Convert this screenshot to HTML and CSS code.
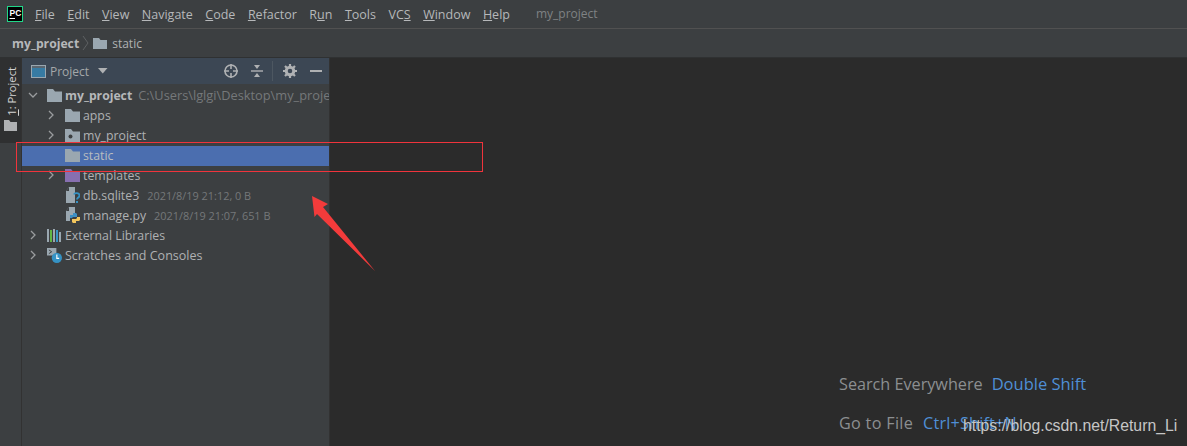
FILE: index.html
```html
<!DOCTYPE html>
<html lang="en">
<head>
<meta charset="utf-8">
<title>my_project</title>
<link rel="stylesheet" href="styles.css">
</head>
<body>
<div class="ide">
  <header class="menubar">
    <svg class="logo" width="16" height="16" viewBox="0 0 16 16"><rect width="16" height="16" fill="#21d789"/><rect x="1" y="1" width="14" height="14" fill="#000"/><text x="2.500" y="9.800" class="logo-text">PC</text><rect x="2.500" y="12" width="5.500" height="1" fill="#fff"/></svg>
    <nav class="menu">
      <span><u>F</u>ile</span><span><u>E</u>dit</span><span><u>V</u>iew</span><span><u>N</u>avigate</span><span><u>C</u>ode</span><span><u>R</u>efactor</span><span>R<u>u</u>n</span><span><u>T</u>ools</span><span>VC<u>S</u></span><span><u>W</u>indow</span><span><u>H</u>elp</span>
    </nav>
    <span class="window-title">my_project</span>
  </header>
  <div class="crumbs">
    <b>my_project</b>
    <svg class="crumb-sep" width="8" height="16" viewBox="0 0 8 16"><path d="M1 1l5 7-5 7" fill="none" stroke="#5e6163"/></svg>
    <svg class="folder" width="14" height="12" viewBox="0 0 14 12"><path d="M0 1h6l1.500 2H14v9H0z" fill="#9aa7b0"/></svg>
    <span>static</span>
  </div>
  <div class="body">
    <aside class="strip">
      <div class="strip-tab">
        <span class="strip-label"><u>1</u>: Project</span>
        <svg width="13" height="11" viewBox="0 0 13 11"><path d="M0 0h5l1.500 2H13v9H0z" fill="#afb1b3"/></svg>
      </div>
    </aside>
    <section class="panel">
      <div class="panel-head">
        <svg class="win-icon" width="15" height="13" viewBox="0 0 15 13"><rect x=".5" y=".5" width="14" height="12" fill="#3592c4" fill-opacity=".7" stroke="#9aa7b0"/><rect x="1" y="1" width="13" height="2" fill="#5a6670"/></svg>
        <span class="panel-title">Project</span>
        <svg class="caret" width="10" height="6" viewBox="0 0 10 6"><path d="M0 0h9.500L4.750 5.500z" fill="#afb1b3"/></svg>
        <div class="panel-tools">
          <svg width="16" height="16" viewBox="0 0 16 16"><circle cx="8" cy="8" r="6" fill="none" stroke="#afb1b3" stroke-width="1.600"/><path d="M8 1v5M8 10v5M1 8h5M10 8h5" stroke="#afb1b3" stroke-width="1.600"/></svg>
          <svg class="tool-collapse" width="14" height="14" viewBox="0 0 14 14"><path d="M1 7h12" stroke="#afb1b3" stroke-width="1.400"/><path d="M4 1h6L7 5zM4 13h6L7 9z" fill="#afb1b3"/></svg>
          <i class="tool-sep"></i>
          <svg class="tool-gear" width="14" height="14" viewBox="0 0 14 14"><circle cx="7" cy="7" r="3.800" fill="none" stroke="#afb1b3" stroke-width="3"/><path d="M7 0v3M7 11v3M0 7h3M11 7h3M2 2l2 2M10 10l2 2M12 2l-2 2M4 10l-2 2" stroke="#afb1b3" stroke-width="2.200"/></svg>
          <i class="tool-min"></i>
        </div>
      </div>
      <ul class="tree">
        <li class="row lvl0">
          <svg class="arrow" width="10" height="10" viewBox="0 0 10 10"><path d="M1 3l4 4 4-4" fill="none" stroke="#9a9c9e" stroke-width="1.300"/></svg>
          <svg class="ico" width="15" height="13" viewBox="0 0 15 13"><path d="M0 0h6l2 2.500h7V13H0z" fill="#9aa7b0"/></svg>
          <b>my_project</b><span class="path">C:\Users\lglgi\Desktop\my_project</span>
        </li>
        <li class="row lvl1">
          <svg class="arrow" width="10" height="10" viewBox="0 0 10 10"><path d="M3 1l4 4-4 4" fill="none" stroke="#9a9c9e" stroke-width="1.300"/></svg>
          <svg class="ico" width="15" height="13" viewBox="0 0 15 13"><path d="M0 0h6l2 2.500h7V13H0z" fill="#9aa7b0"/></svg>
          <span>apps</span>
        </li>
        <li class="row lvl1">
          <svg class="arrow" width="10" height="10" viewBox="0 0 10 10"><path d="M3 1l4 4-4 4" fill="none" stroke="#9a9c9e" stroke-width="1.300"/></svg>
          <svg class="ico" width="15" height="13" viewBox="0 0 15 13"><path d="M0 0h6l2 2.500h7V13H0z" fill="#9aa7b0"/><circle cx="5.500" cy="7.500" r="2" fill="#3c3f41"/></svg>
          <span>my_project</span>
        </li>
        <li class="row lvl1 selected">
          <span class="arrow-gap"></span>
          <svg class="ico" width="15" height="13" viewBox="0 0 15 13"><path d="M0 0h6l2 2.500h7V13H0z" fill="#9aa7b0"/></svg>
          <span>static</span>
        </li>
        <li class="row lvl1">
          <svg class="arrow" width="10" height="10" viewBox="0 0 10 10"><path d="M3 1l4 4-4 4" fill="none" stroke="#9a9c9e" stroke-width="1.300"/></svg>
          <svg class="ico" width="15" height="13" viewBox="0 0 15 13"><path d="M0 0h6l2 2.500h7V13H0z" fill="#876fb0"/></svg>
          <span>templates</span>
        </li>
        <li class="row lvl1">
          <span class="arrow-gap"></span>
          <svg class="ico" width="15" height="16" viewBox="0 0 15 16"><path d="M4 0h6v16H1V4z" fill="#9aa7b0"/><path d="M4 0v4H1z" fill="#3c3f41"/><path d="M9 7.500c.5-2 5.500-2 5.500 1 0 2-2.500 2-2.500 4" fill="none" stroke="#3592c4" stroke-width="1.800"/><rect x="11" y="14" width="2" height="2" fill="#3592c4"/></svg>
          <span>db.sqlite3</span><span class="meta">2021/8/19 21:12, 0 B</span>
        </li>
        <li class="row lvl1">
          <span class="arrow-gap"></span>
          <svg class="ico" width="15" height="16" viewBox="0 0 15 16"><path d="M4 0h6v8H1V4z" fill="#9aa7b0"/><path d="M1 8h4v6H1z" fill="#9aa7b0"/><path d="M4 0v4H1z" fill="#3c3f41"/><path d="M5 11V8h3V6h3l1 1v3H8l-1 1z" fill="#3c8fc4"/><path d="M15 10v3l-1 1h-3v2H8l-1-1v-3h4l1-1v-1z" fill="#f2c55c"/></svg>
          <span>manage.py</span><span class="meta">2021/8/19 21:07, 651 B</span>
        </li>
        <li class="row lvl0">
          <svg class="arrow" width="10" height="10" viewBox="0 0 10 10"><path d="M3 1l4 4-4 4" fill="none" stroke="#9a9c9e" stroke-width="1.300"/></svg>
          <svg class="ico" width="15" height="13" viewBox="0 0 15 13"><rect width="2" height="13" fill="#9aa7b0"/><rect x="3" y="1" width="2" height="12" fill="#62b543"/><rect x="6" width="2" height="13" fill="#9aa7b0"/><rect x="9" y="1" width="2" height="12" fill="#3592c4"/><rect x="12" y="3" width="2" height="10" fill="#9aa7b0"/></svg>
          <span>External Libraries</span>
        </li>
        <li class="row lvl0">
          <svg class="arrow" width="10" height="10" viewBox="0 0 10 10"><path d="M3 1l4 4-4 4" fill="none" stroke="#9a9c9e" stroke-width="1.300"/></svg>
          <svg class="ico" width="15" height="15" viewBox="0 0 16 16"><path d="M0 0h10v8H0z" fill="#9aa7b0"/><path d="M2 2l3 2-3 2" fill="none" stroke="#3c3f41"/><circle cx="10.500" cy="10.500" r="5.500" fill="#3592c4"/><path d="M10.500 7v4h2.500" fill="none" stroke="#fff" stroke-width="1.200"/></svg>
          <span class="wide">Scratches and Consoles</span>
        </li>
      </ul>
    </section>
    <main class="editor">
      <p class="hint"><span>Search Everywhere</span><em>Double Shift</em></p>
      <p class="hint"><span class="spaced">Go to File</span><em class="spaced-key">Ctrl+Shift+N</em></p>
    </main>
  </div>
  <div class="mark-box"></div>
  <svg class="mark-arrow" width="70" height="80" viewBox="0 0 70 80"><path d="M1 0L17 8 12 11 64 75 6 18 3.500 21z" fill="#f33b3b"/></svg>
  <div class="watermark">https://blog.csdn.net/Return_Li</div>
</div>
</body>
</html>
```
FILE: styles.css
```css
* { box-sizing: border-box; }
html, body { margin: 0; padding: 0; }
body { background: #3c3f41; color: #afb1b3; font-family: "Open Sans", "Noto Sans", sans-serif; font-size: 12px; overflow: hidden; }
.ide { position: relative; width: 1187px; height: 446px; display: flex; flex-direction: column; overflow: hidden; }

.menubar { height: 29px; display: flex; align-items: center; padding-left: 7px; background: #3c3f41; border-bottom: 1px solid #515151; flex: none; }
.logo { flex: none; margin-right: 12px; }
.logo-text { font: 700 8.500px "Liberation Sans", sans-serif; fill: #fff; }
.menu { display: flex; gap: 12.500px; color: #b6b8ba; font-size: 12.500px; }
.menu span { white-space: nowrap; }
.window-title { margin-left: 26px; color: #7f8284; font-size: 12px; margin-top: -1px; }

.crumbs { height: 29px; flex: none; display: flex; align-items: center; padding-left: 12px; background: #3c3f41; border-bottom: 1px solid #2f3132; font-size: 12px; }
.crumbs b { color: #b6b8ba; font-size: 12.200px; }
.crumb-sep { margin: 0 3px 0 3px; }
.folder { margin-right: 5px; }

.body { flex: 1; display: flex; min-height: 0; }
.strip { width: 22px; flex: none; background: #3c3f41; border-right: 1px solid #323232; }
.strip-tab { height: 85px; background: #2f3031; display: flex; flex-direction: column; align-items: center; padding-top: 9px; color: #d4d4d4; gap: 4px; }
.strip-label { writing-mode: vertical-rl; transform: rotate(180deg); font-size: 11.200px; line-height: 13px; white-space: nowrap; margin-left: 1px; }

.panel { width: 308px; flex: none; background: #3c3f41; border-right: 1px solid #323232; overflow: hidden; }
.panel-head { height: 26px; background: #3c4754; display: flex; align-items: center; padding-left: 9px; }
.win-icon { margin-right: 4px; }
.panel-title { font-size: 12px; color: #a4a7a9; margin-right: 9px; }
.panel-tools { margin-left: auto; display: flex; align-items: center; padding-right: 7px; }
.tool-collapse { margin-left: 11px; }
.tool-sep { width: 1px; height: 20px; background: #4d5761; margin: 0 10px 0 8px; }
.tool-gear { margin-right: 13px; }
.tool-min { width: 12px; height: 2px; background: #afb1b3; }

.tree { list-style: none; margin: 2px 0 0; padding: 0; }
.row { height: 20px; padding-bottom: 2px; display: flex; align-items: center; white-space: nowrap; color: #afb1b3; font-size: 12.300px; }
.lvl0 { padding-left: 7px; }
.lvl1 { padding-left: 25px; }
.arrow { width: 10px; flex: none; margin-left: -1px; margin-right: 9px; }
.arrow-gap { width: 10px; flex: none; margin-right: 8px; }
.ico { margin-right: 3px; flex: none; }
.row b { color: #b6b8ba; font-size: 12.200px; }
.row .wide { font-size: 12.500px; }
.path { margin-left: 6px; color: #75787a; font-size: 12.800px; }
.meta { margin-left: 8px; color: #75787a; font-size: 10.900px; }
.selected { background: #4b6eaf; color: #b9bdc0; }

.editor { flex: 1; background: #2b2b2b; display: flex; flex-direction: column; align-items: flex-end; justify-content: flex-end; padding-bottom: 4px; }
.hint { margin: 0 100px 0 0; width: 248px; height: 39px; font-size: 16.200px; color: #8c8f91; white-space: nowrap; display: flex; align-items: center; }
.hint em { font-style: normal; color: #4f8fd6; margin-left: 9px; font-size: 16.500px; }
.hint .spaced { letter-spacing: .3px; }
.hint .spaced-key { margin-left: 10px; font-size: 16.200px; letter-spacing: .2px; }

.mark-box { position: absolute; left: 16px; top: 142px; width: 467px; height: 30px; border: 1px solid #f0343c; }
.mark-arrow { position: absolute; left: 311px; top: 196px; }
.watermark { position: absolute; left: 963px; top: 417px; font: 15.800px "Liberation Sans", sans-serif; color: #c6c6c6; white-space: nowrap; }
```
